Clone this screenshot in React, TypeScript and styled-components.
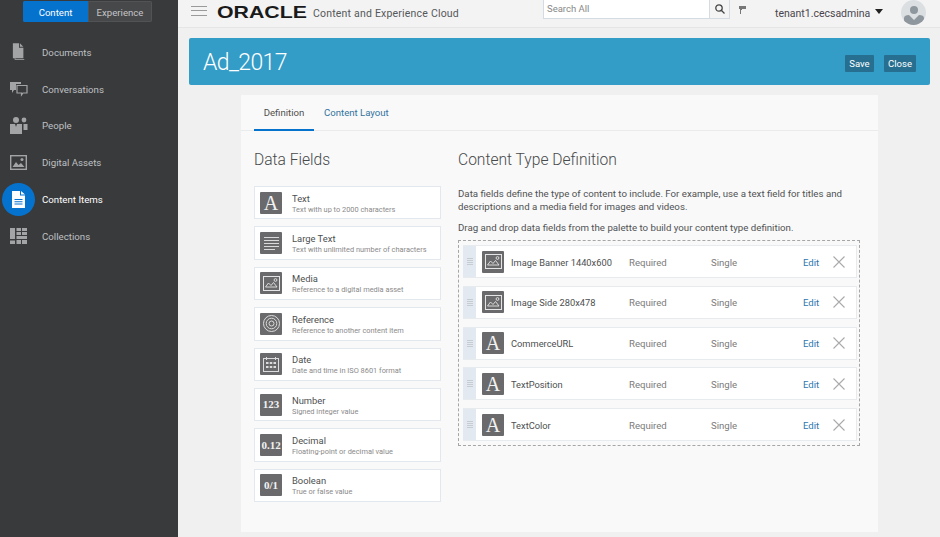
import React from 'react'
import styled, { createGlobalStyle } from 'styled-components'

const GlobalStyle = createGlobalStyle`
  html, body {
    margin: 0;
    height: 100%;
    overflow: hidden;
    background: #f0f0f0;
    font-family: Roboto, "Open Sans", sans-serif;
  }
  * { box-sizing: border-box; }
`

const DocIcon = () => (
  <svg width="14" height="18" viewBox="0 0 16 20">
    <path d="M3 3h1v15h10v1H3z" fill="#8d8e90" />
    <path d="M1 0h7v5h5v12H1zM9 0l4 4H9z" fill="#a3a4a6" />
  </svg>
)
const ChatIcon = () => (
  <svg width="18" height="15" viewBox="0 0 18 15">
    <path d="M0 0h11v2H6v6H4l-2 3V8H0z" fill="#a3a4a6" />
    <path d="M7 3.500h10v7.500h-4l-1.500 2V11H7z" fill="none" stroke="#a3a4a6" strokeWidth="1.200" />
  </svg>
)
const PeopleIcon = () => (
  <svg width="18" height="17" viewBox="0 0 18 17">
    <circle cx="6" cy="3" r="3" fill="#a3a4a6" />
    <circle cx="14" cy="3" r="2.400" fill="#a3a4a6" />
    <path d="M0 7h12v10H0z" fill="#a3a4a6" />
    <path d="M5 7h2l-1 3z" fill="#393a3c" />
    <path d="M13.500 7h4v6h-4z" fill="#a3a4a6" />
  </svg>
)
const AssetsIcon = () => (
  <svg width="17" height="15" viewBox="0 0 17 15">
    <rect x="0.700" y="0.700" width="15.600" height="13.600" fill="none" stroke="#a3a4a6" strokeWidth="1.400" />
    <path d="M2.500 12l3.500-5 2.500 3 2.500-2 3.500 4z" fill="#a3a4a6" />
    <circle cx="12" cy="4.500" r="1.500" fill="#a3a4a6" />
  </svg>
)
const ContentIcon = () => (
  <svg width="13" height="17" viewBox="0 0 13 17">
    <path d="M0 0h8v4.500h5V17H0zM9 0l4 3.500H9z" fill="#fff" />
    <path d="M2.500 8h8v1h-8zM2.500 10.200h8v1h-8zM2.500 12.400h8v1h-8z" fill="#0572ce" />
  </svg>
)
const CollectionsIcon = () => (
  <svg width="17" height="16" viewBox="0 0 17 16">
    <g fill="#a3a4a6">
      <path d="M0 0h5v11H0zM0 12.500h5V16H0zM6.500 0H11v3H6.500zM12 0h5v3h-5zM6.500 4H11v3H6.500zM12 4h5v3h-5zM6.500 8H17v3H6.500zM6.500 12H11v4H6.500zM12 12h5v4h-5z" />
    </g>
  </svg>
)

const TextGlyph = styled.span<{ $size: number; $regular?: boolean }>`
  font-family: "Liberation Serif", serif;
  font-weight: ${p => (p.$regular ? 400 : 700)};
  color: #f2f2f2;
  font-size: ${p => p.$size}px;
  line-height: 1;
  white-space: nowrap;
`
const ImageGlyph = () => (
  <svg width="17" height="15" viewBox="0 0 17 15" fill="none" stroke="#e4e4e4">
    <rect x="0.500" y="0.500" width="16" height="14" />
    <path d="M2.500 11l3-4 2.500 2.500 2.500-3 3.500 4.500H2.500z" strokeWidth="0.900" />
    <circle cx="12.500" cy="4" r="1.400" strokeWidth="0.900" />
  </svg>
)
const LinesGlyph = () => (
  <svg width="15" height="13" viewBox="0 0 15 13" fill="#d9d9d9">
    <path d="M0 0h15v1H0zM0 3h15v1H0zM0 6h15v1H0zM0 9h15v1H0zM0 12h11v1H0z" />
  </svg>
)
const TargetGlyph = () => (
  <svg width="17" height="17" viewBox="0 0 17 17" fill="none" stroke="#dcdcdc">
    <circle cx="8.500" cy="8.500" r="8" />
    <circle cx="8.500" cy="8.500" r="5.300" />
    <circle cx="8.500" cy="8.500" r="2.500" />
  </svg>
)
const DateGlyph = () => (
  <svg width="16" height="15" viewBox="0 0 16 15">
    <rect x="0.500" y="1.500" width="15" height="13" fill="none" stroke="#dcdcdc" />
    <path d="M3 0h1v3H3zM12 0h1v3h-1z" fill="#dcdcdc" />
    <path d="M3 5h2.500v2H3zM6.750 5h2.500v2h-2.500zM10.500 5H13v2h-2.500zM3 9h2.500v2H3zM6.750 9h2.500v2h-2.500zM10.500 9H13v2h-2.500z" fill="#dcdcdc" />
  </svg>
)

const Shell = styled.div`
  display: flex;
  width: 940px;
  height: 537px;
  overflow: hidden;
`
const Sidebar = styled.aside`
  width: 178px;
  flex: none;
  background: #393a3c;
  padding-top: 1px;
`
const Switch = styled.div`
  display: flex;
  width: 129px;
  height: 21px;
  margin-left: 23px;
  border-radius: 2px;
  overflow: hidden;
`
const SwitchTab = styled.div<{ $active?: boolean }>`
  display: flex;
  align-items: center;
  justify-content: center;
  width: ${p => (p.$active ? '65px' : '64px')};
  padding-top: 1px;
  font-size: 9.600px;
  color: ${p => (p.$active ? '#fff' : '#c4c5c7')};
  background: ${p => (p.$active ? '#0572ce' : '#47484a')};
  border: 1px solid ${p => (p.$active ? '#0572ce' : '#525355')};
`
const NavList = styled.nav`
  display: flex;
  flex-direction: column;
  margin-top: 12px;
`
const NavItem = styled.div`
  display: flex;
  align-items: center;
  height: 36.800px;
  padding-left: 2px;
`
const NavIcon = styled.div<{ $active?: boolean }>`
  width: 33px;
  height: 33px;
  flex: none;
  display: flex;
  align-items: center;
  justify-content: center;
  border-radius: 50%;
  background: ${p => (p.$active ? '#0572ce' : 'transparent')};
`
const NavLabel = styled.span<{ $active?: boolean }>`
  margin-left: 7px;
  font-size: 9.700px;
  color: ${p => (p.$active ? '#fff' : '#bfc0c2')};
`

const Main = styled.main`
  flex: 1;
  min-width: 0;
  display: flex;
  flex-direction: column;
`
const Header = styled.header`
  display: flex;
  align-items: center;
  height: 28px;
  flex: none;
  background: #f3f3f3;
  border-bottom: 1px solid #e4e6e6;
  padding-left: 13px;
`
const Burger = styled.div`
  width: 16px;
  height: 10px;
  margin-bottom: 6px;
  border-top: 1px solid #9a9a9a;
  border-bottom: 1px solid #9a9a9a;
  position: relative;
  &::after {
    content: '';
    position: absolute;
    left: 0;
    right: 0;
    top: 3px;
    height: 1px;
    background: #9a9a9a;
  }
`
const LogoBox = styled.div`
  width: 89px;
  margin: 0 0 3px 10px;
  flex: none;
`
const Logo = styled.span`
  display: block;
  font-family: "Liberation Sans", sans-serif;
  font-size: 16.500px;
  line-height: 1;
  font-weight: 700;
  color: #1a1a1a;
  transform: scaleX(1.29);
  transform-origin: left center;
`
const Product = styled.span`
  width: 145px;
  flex: none;
  margin-left: 7px;
  font-size: 10.500px;
  color: #55585a;
  white-space: nowrap;
  letter-spacing: 0.2px;
`
const SearchBox = styled.div`
  display: flex;
  width: 187px;
  height: 20px;
  margin: 0 0 9px 85px;
  flex: none;
  border: 1px solid #d4dbe2;
  background: #fff;
`
const SearchText = styled.span`
  flex: 1;
  padding-left: 3px;
  font-size: 9.500px;
  line-height: 18px;
  color: #888;
`
const SearchButton = styled.div`
  width: 20px;
  display: flex;
  align-items: center;
  justify-content: center;
  border-left: 1px solid #d4dbe2;
  background: #f4f4f4;
`
const Flag = styled.svg`
  margin: 0 0 9px 9px;
  flex: none;
`
const User = styled.span`
  width: 95px;
  flex: none;
  margin-left: 28px;
  font-size: 10.500px;
  color: #4a454d;
  white-space: nowrap;
`
const Caret = styled.span`
  width: 0;
  height: 0;
  flex: none;
  margin: 0 0 4px 5px;
  border-left: 4px solid transparent;
  border-right: 4px solid transparent;
  border-top: 5px solid #222;
`
const Avatar = styled.div`
  width: 25px;
  height: 25px;
  flex: none;
  margin: -3px 0 0 18px;
  display: flex;
  align-items: flex-end;
  justify-content: center;
  border-radius: 50%;
  background: #dcdfe2;
  overflow: hidden;
`
const Content = styled.div`
  flex: 1;
  min-height: 0;
  padding: 10px 10px 0 11px;
`
const Banner = styled.div`
  height: 47px;
  display: flex;
  align-items: center;
  justify-content: space-between;
  background: #339cc7;
  border-radius: 2px;
  padding: 0 14px;
`
const BannerTitle = styled.h1`
  margin: 2px 0 0;
  color: #fff;
  font-size: 23px;
  font-weight: 300;
  letter-spacing: -0.6px;
`
const BannerActions = styled.div`
  display: flex;
  gap: 10px;
  margin-top: 3px;
`
const BannerButton = styled.button<{ $width: number }>`
  width: ${p => p.$width}px;
  height: 17px;
  padding: 0;
  font: 9.500px Roboto, sans-serif;
  color: #fff;
  background: #276f90;
  border: 0;
  border-radius: 1px;
`
const Panel = styled.section`
  width: 637px;
  height: 437px;
  margin: 10px 0 0 52px;
  background: #f9f9f9;
`
const Tabs = styled.div`
  display: flex;
  height: 36px;
  padding-left: 13px;
  border-bottom: 1px solid #e9ebec;
`
const Tab = styled.div<{ $active?: boolean }>`
  display: flex;
  align-items: center;
  justify-content: center;
  width: ${p => (p.$active ? '60px' : 'auto')};
  height: 36px;
  margin-left: ${p => (p.$active ? '0' : '10px')};
  font-size: 9.600px;
  color: ${p => (p.$active ? '#4f4f4f' : '#33739f')};
  border-bottom: 2px solid ${p => (p.$active ? '#0572ce' : 'transparent')};
`
const Columns = styled.div`
  display: flex;
  padding: 19px 0 0 13px;
`
const Palette = styled.div`
  width: 187px;
  flex: none;
`
const SectionTitle = styled.h2`
  margin: 0;
  font-size: 15.600px;
  line-height: 20px;
  font-weight: 300;
  color: #47494b;
`
const PaletteList = styled.div`
  display: flex;
  flex-direction: column;
  gap: 7px;
  margin-top: 16px;
`
const PaletteItem = styled.div`
  display: flex;
  align-items: center;
  height: 33.400px;
  padding-left: 5px;
  background: #fff;
  border: 1px solid #e3e8ee;
`
const TypeIcon = styled.div`
  width: 22px;
  height: 22px;
  flex: none;
  display: flex;
  align-items: center;
  justify-content: center;
  background: #6a6a6c;
  border-radius: 1px;
`
const ItemText = styled.div`
  margin-left: 10px;
  padding-top: 1px;
  display: flex;
  flex-direction: column;
`
const ItemName = styled.span`
  font-size: 9.400px;
  line-height: 13px;
  color: #4d4f50;
`
const ItemHint = styled.span`
  font-size: 7.400px;
  line-height: 10px;
  color: #8a8a8a;
  white-space: nowrap;
`
const Definition = styled.div`
  width: 402px;
  margin-left: 17px;
`
const Para = styled.p<{ $gap: number }>`
  margin: ${p => p.$gap}px 0 0;
  font-size: 9.700px;
  line-height: 13px;
  color: #505254;
`
const DropZone = styled.div`
  display: flex;
  flex-direction: column;
  gap: 7.750px;
  height: 206px;
  margin-top: 6px;
  padding: 4px 2px 0 4px;
  border: 1px dashed #a6a6a6;
`
const FieldRow = styled.div`
  display: flex;
  align-items: center;
  height: 33px;
  flex: none;
  background: #fff;
  border: 1px solid #e8ebee;
  border-left: 0;
`
const Handle = styled.div`
  width: 13px;
  height: 100%;
  flex: none;
  display: flex;
  align-items: center;
  justify-content: center;
  background: #e2e9f0;
`
const Grip = styled.div`
  width: 6px;
  height: 7px;
  background: repeating-linear-gradient(#c6ccd2 0 1px, transparent 1px 2px);
`
const FieldIcon = styled(TypeIcon)`
  margin-left: 6px;
`
const FieldCell = styled.span<{ $width: number; $muted?: boolean }>`
  width: ${p => p.$width}px;
  flex: none;
  padding-top: 1px;
  font-size: ${p => (p.$muted ? '9.600px' : '9.300px')};
  color: ${p => (p.$muted ? '#7b7b7b' : '#4d4f50')};
  white-space: nowrap;
`
const FieldName = styled(FieldCell)`
  margin-left: 7px;
`
const EditLink = styled.a`
  width: 30px;
  flex: none;
  padding-top: 1px;
  font-size: 9.600px;
  color: #2f77ae;
`
const RemoveIcon = () => (
  <svg width="12" height="12" viewBox="0 0 12 12" stroke="#aaa" strokeWidth="1.100">
    <path d="M.5.5l11 11M11.500.5l-11 11" />
  </svg>
)

const navItems = [
  { label: 'Documents', icon: <DocIcon /> },
  { label: 'Conversations', icon: <ChatIcon /> },
  { label: 'People', icon: <PeopleIcon /> },
  { label: 'Digital Assets', icon: <AssetsIcon /> },
  { label: 'Content Items', icon: <ContentIcon />, active: true },
  { label: 'Collections', icon: <CollectionsIcon /> },
]

const letterA = <TextGlyph $size={20} $regular>A</TextGlyph>

const paletteItems = [
  { name: 'Text', hint: 'Text with up to 2000 characters', icon: letterA },
  { name: 'Large Text', hint: 'Text with unlimited number of characters', icon: <LinesGlyph /> },
  { name: 'Media', hint: 'Reference to a digital media asset', icon: <ImageGlyph /> },
  { name: 'Reference', hint: 'Reference to another content item', icon: <TargetGlyph /> },
  { name: 'Date', hint: 'Date and time in ISO 8601 format', icon: <DateGlyph /> },
  { name: 'Number', hint: 'Signed integer value', icon: <TextGlyph $size={11}>123</TextGlyph> },
  { name: 'Decimal', hint: 'Floating-point or decimal value', icon: <TextGlyph $size={11}>0.12</TextGlyph> },
  { name: 'Boolean', hint: 'True or false value', icon: <TextGlyph $size={11}>0/1</TextGlyph> },
]

const fields = [
  { name: 'Image Banner 1440x600', icon: <ImageGlyph /> },
  { name: 'Image Side 280x478', icon: <ImageGlyph /> },
  { name: 'CommerceURL', icon: letterA },
  { name: 'TextPosition', icon: letterA },
  { name: 'TextColor', icon: letterA },
]

export default function App() {
  return (
    <Shell>
      <GlobalStyle />
      <Sidebar>
        <Switch>
          <SwitchTab $active>Content</SwitchTab>
          <SwitchTab>Experience</SwitchTab>
        </Switch>
        <NavList>
          {navItems.map(item => (
            <NavItem key={item.label}>
              <NavIcon $active={item.active}>{item.icon}</NavIcon>
              <NavLabel $active={item.active}>{item.label}</NavLabel>
            </NavItem>
          ))}
        </NavList>
      </Sidebar>
      <Main>
        <Header>
          <Burger />
          <LogoBox>
            <Logo>ORACLE</Logo>
          </LogoBox>
          <Product>Content and Experience Cloud</Product>
          <SearchBox>
            <SearchText>Search All</SearchText>
            <SearchButton>
              <svg width="10" height="10" viewBox="0 0 10 10" fill="none" stroke="#444" strokeWidth="1.300">
                <circle cx="4" cy="4" r="3.200" />
                <path d="M6.500 6.500L9.500 9.500" />
              </svg>
            </SearchButton>
          </SearchBox>
          <Flag width="8" height="9" viewBox="0 0 8 9">
            <path d="M0 1h7v3H3v1H2v4H1V4H0z" fill="#777" />
          </Flag>
          <User>tenant1.cecsadmina</User>
          <Caret />
          <Avatar>
            <svg width="20" height="20" viewBox="0 0 20 20" fill="#8f979e">
              <circle cx="10" cy="5" r="4" />
              <path d="M0 20v-7c0-2 2-3 5-3l5 5 5-5c3 0 5 1 5 3v7z" />
            </svg>
          </Avatar>
        </Header>
        <Content>
          <Banner>
            <BannerTitle>Ad_2017</BannerTitle>
            <BannerActions>
              <BannerButton $width={29}>Save</BannerButton>
              <BannerButton $width={32}>Close</BannerButton>
            </BannerActions>
          </Banner>
          <Panel>
            <Tabs>
              <Tab $active>Definition</Tab>
              <Tab>Content Layout</Tab>
            </Tabs>
            <Columns>
              <Palette>
                <SectionTitle>Data Fields</SectionTitle>
                <PaletteList>
                  {paletteItems.map(item => (
                    <PaletteItem key={item.name}>
                      <TypeIcon>{item.icon}</TypeIcon>
                      <ItemText>
                        <ItemName>{item.name}</ItemName>
                        <ItemHint>{item.hint}</ItemHint>
                      </ItemText>
                    </PaletteItem>
                  ))}
                </PaletteList>
              </Palette>
              <Definition>
                <SectionTitle>Content Type Definition</SectionTitle>
                <Para $gap={17}>
                  Data fields define the type of content to include. For example, use a text field for titles and
                  descriptions and a media field for images and videos.
                </Para>
                <Para $gap={8}>Drag and drop data fields from the palette to build your content type definition.</Para>
                <DropZone>
                  {fields.map(field => (
                    <FieldRow key={field.name}>
                      <Handle>
                        <Grip />
                      </Handle>
                      <FieldIcon>{field.icon}</FieldIcon>
                      <FieldName $width={118}>{field.name}</FieldName>
                      <FieldCell $width={82} $muted>Required</FieldCell>
                      <FieldCell $width={92} $muted>Single</FieldCell>
                      <EditLink>Edit</EditLink>
                      <RemoveIcon />
                    </FieldRow>
                  ))}
                </DropZone>
              </Definition>
            </Columns>
          </Panel>
        </Content>
      </Main>
    </Shell>
  )
}
